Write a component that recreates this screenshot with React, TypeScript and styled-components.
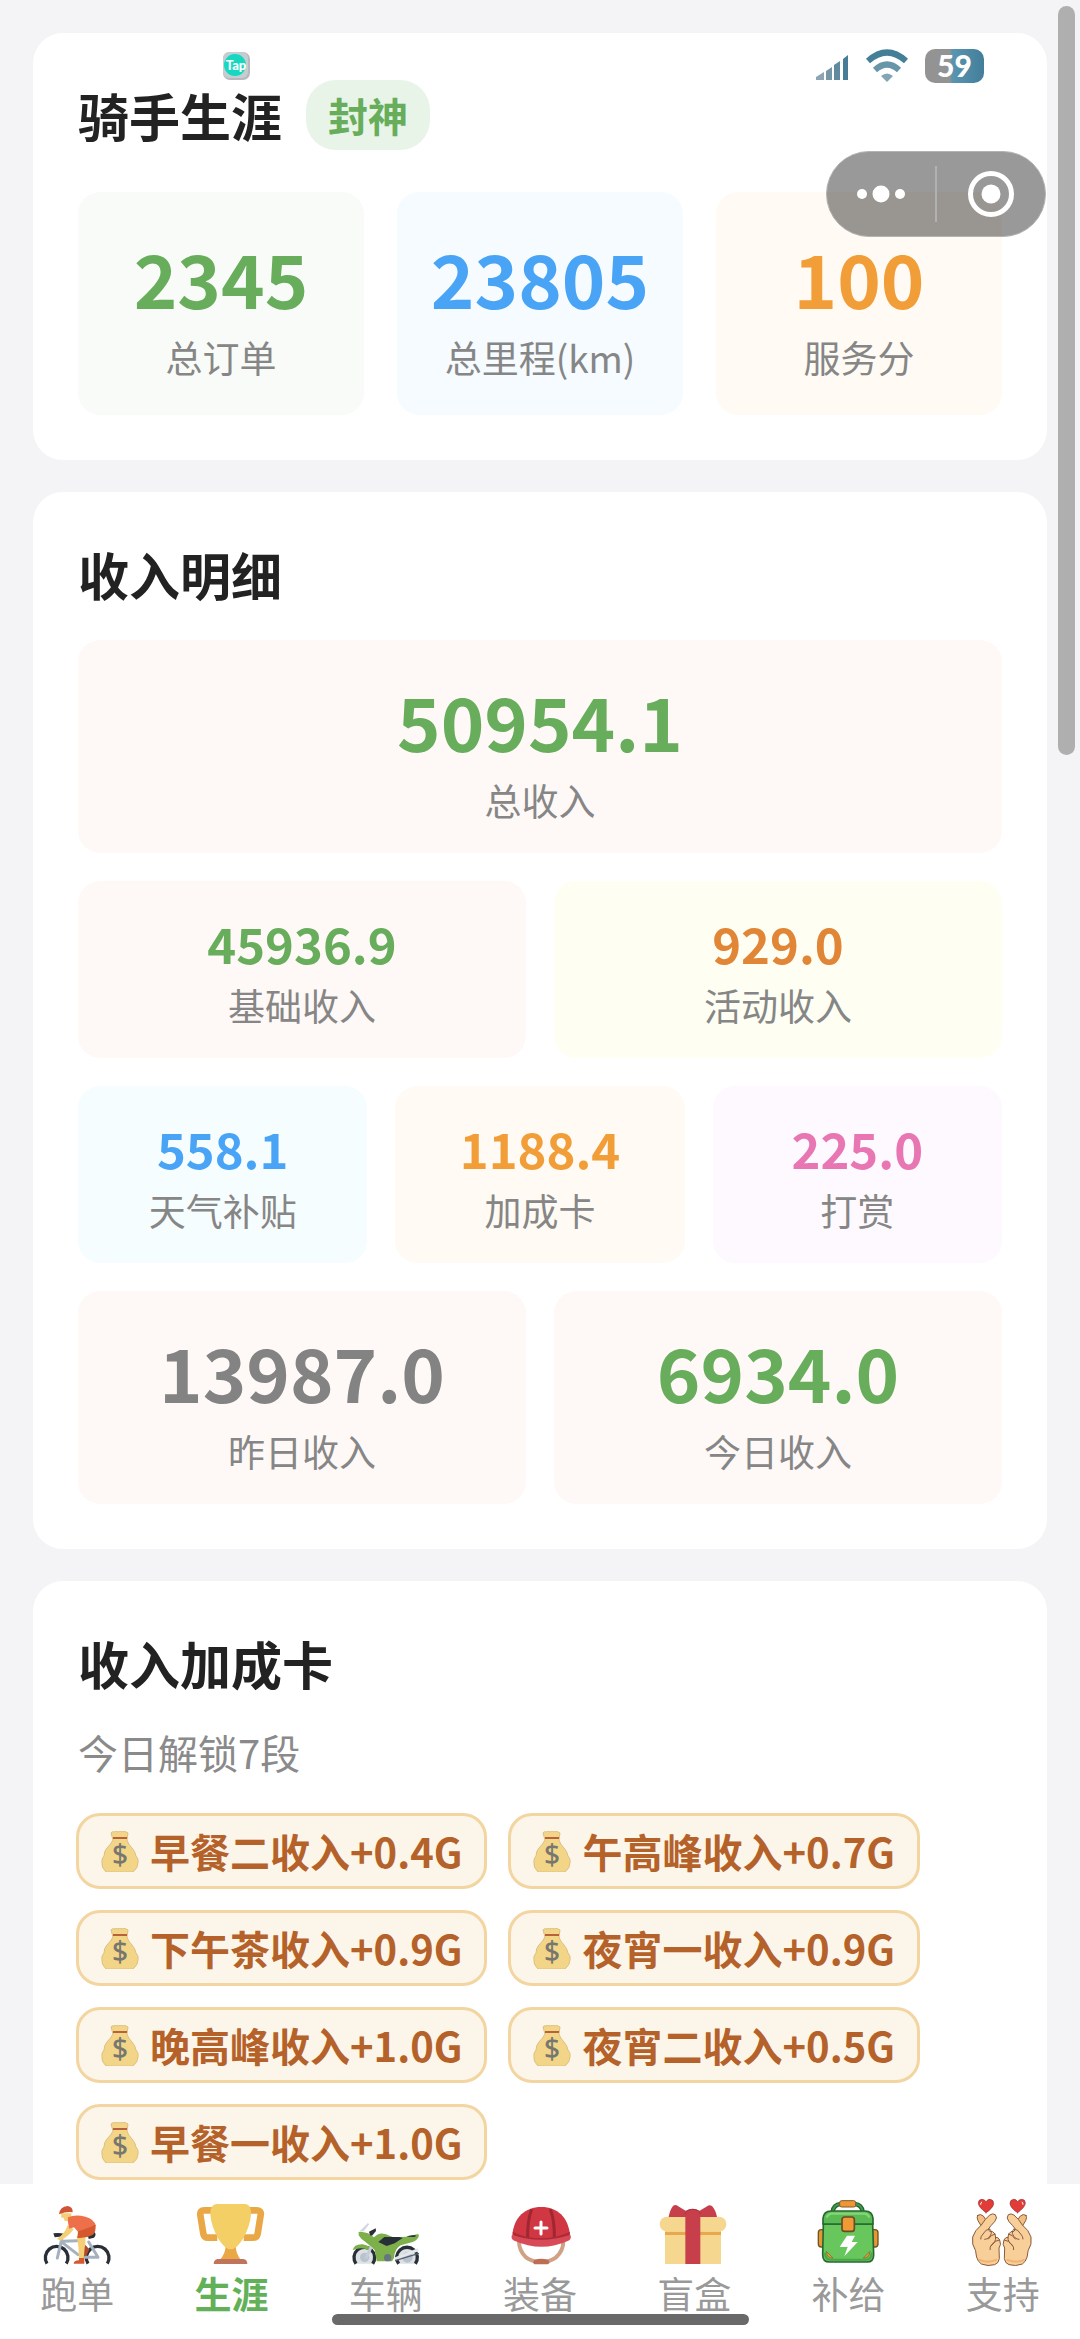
import { ReactNode } from 'react'
import styled, { createGlobalStyle } from 'styled-components'

const GlobalStyle = createGlobalStyle`
  * {
    box-sizing: border-box;
  }
  body {
    margin: 0;
    background: #f4f4f7;
    font-family: 'Noto Sans CJK SC', 'Noto Sans', sans-serif;
  }
  h2, p {
    margin: 0;
  }
`

const Screen = styled.div`
  position: relative;
  display: flex;
  flex-direction: column;
  height: 100vh;
  overflow: hidden;
`

const Content = styled.main`
  flex: 1;
  min-height: 0;
  display: flex;
  flex-direction: column;
  gap: 32px;
  padding: 33px;
  overflow-y: auto;
  scrollbar-width: none;
`

const Card = styled.section`
  flex-shrink: 0;
  padding: 45px;
  border-radius: 30px;
  background: #fff;
`

const CardHeader = styled.div<{ $gap: number }>`
  display: flex;
  align-items: center;
  gap: 24px;
  margin-bottom: ${(p) => p.$gap}px;
`

const CardTitle = styled.h2`
  font-size: 51px;
  line-height: 74px;
  font-weight: 700;
  color: #222;
`

const Badge = styled.span`
  padding: 6px 22px;
  border-radius: 30px;
  background: #e8f4e8;
  color: #67ad5b;
  font-size: 40px;
  line-height: 58px;
  font-weight: 700;
`

const TileGrid = styled.div<{ $gap: number }>`
  display: flex;
  flex-direction: column;
  gap: ${(p) => p.$gap}px;
`

const TileRow = styled.div<{ $gap: number }>`
  display: flex;
  gap: ${(p) => p.$gap}px;
`

const Tile = styled.div<{ $bg: string; $pad: number }>`
  flex: 1 1 0;
  min-width: 0;
  padding: ${(p) => p.$pad}px 0;
  border-radius: 22px;
  background: ${(p) => p.$bg};
  text-align: center;
`

const TileValue = styled.p<{ $color: string; $small?: boolean }>`
  font-size: ${(p) => (p.$small ? 49 : 74)}px;
  line-height: ${(p) => (p.$small ? 72 : 108)}px;
  font-weight: 700;
  color: ${(p) => p.$color};
`

const TileLabel = styled.p`
  font-size: 37px;
  line-height: 53px;
  color: #868686;
`

const Hint = styled.p`
  margin-bottom: 32px;
  font-size: 40px;
  line-height: 58px;
  color: #8a8a8a;
`

const ChipList = styled.ul`
  display: flex;
  flex-wrap: wrap;
  gap: 21px;
  margin: 0 -2px;
  padding: 0;
  list-style: none;
`

const Chip = styled.li`
  display: flex;
  align-items: center;
  gap: 11px;
  padding: 6px 22px;
  border: 3px solid #f2d5a1;
  border-radius: 24px;
  background: #fcf6ea;
  color: #b5622a;
  font-size: 40px;
  line-height: 58px;
  font-weight: 700;
`

const TabBar = styled.nav`
  display: flex;
  flex-shrink: 0;
  padding: 14px 0 19px;
  background: #fff;
`

const TabLink = styled.a<{ $active?: boolean }>`
  flex: 1 1 0;
  display: flex;
  flex-direction: column;
  align-items: center;
  color: ${(p) => (p.$active ? '#62b058' : '#999')};
  font-size: 37px;
  line-height: 54px;
  font-weight: ${(p) => (p.$active ? 700 : 400)};
  text-decoration: none;
`

const TabSvg = styled.svg`
  display: block;
  width: 72px;
  height: 68px;
`

const HomeBar = styled.div`
  position: absolute;
  bottom: 14px;
  left: 50%;
  width: 417px;
  height: 11px;
  margin-left: -208px;
  border-radius: 6px;
  background: #696969;
`

const ScrollThumb = styled.div`
  position: absolute;
  top: 6px;
  right: 5px;
  width: 17px;
  height: 749px;
  border-radius: 9px;
  background: #afafaf;
`

const StatusBar = styled.div`
  position: absolute;
  top: 48px;
  left: 0;
  right: 0;
  display: flex;
  align-items: center;
  justify-content: space-between;
  height: 36px;
  padding: 0 96px 0 222px;
  pointer-events: none;
`

const StatusIcons = styled.div`
  display: flex;
  align-items: center;
  gap: 16px;
`

const Battery = styled.span`
  width: 59px;
  height: 34px;
  border-radius: 10px;
  background: linear-gradient(90deg, #939393 42%, #5a94b0 46%, #427e9a 100%);
  color: #fff;
  font-family: Lato, sans-serif;
  font-size: 30px;
  line-height: 32px;
  font-weight: 900;
  text-align: center;
`

const Capsule = styled.div`
  position: absolute;
  top: 151px;
  right: 34px;
  display: flex;
  align-items: center;
  width: 220px;
  height: 86px;
  border: 1px solid #b4b4b4;
  border-radius: 43px;
  background: rgba(0, 0, 0, 0.4);
`

const CapsuleButton = styled.button`
  flex: 1;
  display: flex;
  align-items: center;
  justify-content: center;
  height: 100%;
  padding: 0;
  border: 0;
  background: none;
`

const CapsuleDivider = styled.span`
  width: 2px;
  height: 56px;
  background: #b2b2b2;
`

function MoneyBag() {
  return (
    <svg width="38" height="41" viewBox="0 0 38 41" aria-hidden="true">
      <path
        d="M12 9 10 2q1-2 3-1 2-2 4 0 2-2 4 0 2-2 4 0l2 1-1 7q1 4 5 8 3 3 4 8 3 3 2 7 0 5-5 9H5q-5-5-4-9-1-4 2-7 0-5 3-8 4-4 6-8Z"
        fill="#f3d588"
        stroke="#dcc082"
        strokeWidth="1"
      />
      <path d="M12 7h14" stroke="#b9603f" strokeWidth="2" />
      <text
        x="19"
        y="34"
        textAnchor="middle"
        fontFamily="Noto Sans"
        fontSize="28"
        fontWeight="500"
        fill="#76786f"
      >
        $
      </text>
    </svg>
  )
}

function BikeIcon() {
  return (
    <TabSvg viewBox="123 54 216 204" aria-hidden="true">
      <g fill="none" stroke="#292f36" strokeWidth="10">
        <path d="M141 251a34 34 0 1 1 58 0" />
        <path d="M264 251a34 34 0 1 1 58 0" />
      </g>
      <path d="M246 186q14 12 22 22l-8 18-10 10Z" fill="#b04a2c" />
      <g fill="none" stroke="#a6b1bf" strokeWidth="9" strokeLinecap="round" strokeLinejoin="round">
        <path d="M185 178 172 234M188 184l44-2M190 190l44 34M266 186l28 46h-38" />
      </g>
      <path d="M160 160q16-3 32 1l-2 10-12-1-14 2Z" fill="#292f36" />
      <path d="M262 160l22-3q6 8-2 16l-16 4Z" fill="#292f36" />
      <path d="M203 136l18 12q-16 22-40 34l-10-6q22-12 32-40Z" fill="#f5cf75" />
      <path d="M230 168l26 0q2 22-2 36l-3 34h-14l-2-40Z" fill="#f5cf75" />
      <path d="M184 100h30v14q-4 8-12 10l-8-2-3-8-8-2Z" fill="#f5cf75" />
      <path d="M204 112q22-10 52-2 28 8 32 28l-20 12-28 12-18-20-14 4q-6-22-4-34Z" fill="#ed704a" />
      <path d="M286 134q4 22-10 32-18 10-44 8l2-20q32-10 52-20Z" fill="#d5582f" />
      <path d="M177 103q3-24 26-25 16 2 15 19-18-3-41 6Z" fill="#cf5436" />
      <path d="M237 234h16v17h-32q0-9 16-10Z" fill="#d5582f" />
    </TabSvg>
  )
}

function TrophyIcon() {
  return (
    <TabSvg viewBox="586 54 216 204" aria-hidden="true">
      <path
        d="M640 91h-26q-14 0-12 14l9 56q2 12 14 12h28M744 91h26q16 0 13 14l-9 56q-2 12-14 12h-28"
        fill="none"
        stroke="#e9a746"
        strokeWidth="20"
      />
      <path d="M678 196h30q0 26 16 44h-64q18-18 18-44Z" fill="#e9a746" />
      <path d="M653 237h78q12 2 12 15H642q0-12 11-15Z" fill="#c0745c" />
      <path d="M650 72h88q17 3 16 30-2 36-24 74-20 32-37 32t-37-32q-22-38-24-74-1-27 18-30Z" fill="#f4cf65" />
    </TabSvg>
  )
}

function MotorbikeIcon() {
  return (
    <TabSvg viewBox="239 54 216 204" aria-hidden="true">
      <g fill="#dce1e6" stroke="#292f36" strokeWidth="10">
        <path d="M257 251a31 31 0 1 1 50 0" />
        <path d="M385 251a31 31 0 1 1 50 0" />
      </g>
      <circle cx="283" cy="232" r="14" fill="#b9c2cd" />
      <circle cx="411" cy="232" r="16" fill="#b9c2cd" />
      <path
        d="M265 156q10-2 28 4l18 12q14-16 34-10l24 10 40-2 34-8q4 2 2 8-4 10-18 16l-36 10q-18 10-20 38l-6 10h-46l-6-34-20-18-20-16-8-10Z"
        fill="#7daf4b"
      />
      <path d="M247 211q4-20 31-18l24 8-8 10q-20-12-47 0Z" fill="#7daf4b" />
      <path d="M268 154l24-24 5 2-17 22Z" fill="#d0d7de" />
      <path d="M296 155l20-10 1 8-12 14-6-1Z" fill="#292f36" />
      <path d="M324 186l18-15h45l10 3-24 16-24 8Z" fill="#292f36" />
      <path d="M408 170q8-6 29-4l-3 5Z" fill="#292f36" />
      <path d="M303 200 287 235" stroke="#c5cdd6" strokeWidth="9" />
      <path d="M374 237l70-28" stroke="#e4e8ec" strokeWidth="9" />
      <path d="M374 242l72-22" stroke="#59636d" strokeWidth="4" />
      <circle cx="352" cy="233" r="11" fill="#66757f" />
    </TabSvg>
  )
}

function HelmetIcon() {
  return (
    <TabSvg viewBox="72 54 216 204" aria-hidden="true">
      <path d="M117 184q0 30 22 49 18 13 44 13t44-13q23-19 23-49" fill="none" stroke="#d1a185" strokeWidth="12" />
      <path d="M163 240q20-7 42 0l4 8-5 5h-41l-4-5Z" fill="#bd6d55" />
      <path d="M97 164C102 112 135 81 184 81s80 31 86 83q-84 44-173 0Z" fill="#d13643" />
      <path d="M155 88q-13 34-12 86M211 88q13 34 12 86" fill="none" stroke="#9d2831" strokeWidth="9" />
      <path d="M98 156q84 38 172 0l-3 14q-82 28-166 0Z" fill="#a92b36" />
      <path d="M96 164q86 30 175 0 5 12-6 18-80 36-162 0-12-6-7-18Z" fill="#d84a58" />
      <path d="M183 126v36M165 144h36" stroke="#fff" strokeWidth="9" strokeLinecap="round" />
    </TabSvg>
  )
}

function GiftIcon() {
  return (
    <TabSvg viewBox="535 54 216 204" aria-hidden="true">
      <path d="M556 150h168v102H556Z" fill="#f5d78f" />
      <path d="M556 155h168v10H556Z" fill="#e8a94c" />
      <rect x="540" y="110" width="200" height="45" rx="22" fill="#f5d78f" />
      <path d="M567 111q4-22 13-33 8-7 18 2l20 12q20-11 42 0l20-12q8-8 17-2 11 12 15 33Z" fill="#c83f4c" />
      <path d="M617 100h45v152h-45Z" fill="#c83f4c" />
      <path d="M617 103q2-14 23-15 20 1 22 15" fill="none" stroke="#a93540" strokeWidth="3" />
    </TabSvg>
  )
}

function BackpackIcon() {
  return (
    <TabSvg viewBox="158 54 216 204" aria-hidden="true">
      <path d="M217 96q2-22 24-24h42q22 2 24 24" fill="none" stroke="#23622f" strokeWidth="13" />
      <path d="M217 96q2-22 24-24h42q22 2 24 24" fill="none" stroke="#3f9a49" strokeWidth="6" />
      <rect x="238" y="62" width="48" height="19" rx="6" fill="#ed9832" stroke="#86572a" strokeWidth="3" />
      <rect x="174" y="149" width="24" height="52" rx="9" fill="#e99535" stroke="#6b5625" strokeWidth="4" />
      <rect x="329" y="149" width="24" height="52" rx="9" fill="#e99535" stroke="#6b5625" strokeWidth="4" />
      <path d="M189 132h148l3 92q0 22-20 22H207q-20 0-20-22Z" fill="#67c65c" stroke="#28682f" strokeWidth="5" />
      <path d="M194 218q0 20 16 21h108q16-1 16-21" fill="none" stroke="#48a74b" strokeWidth="6" />
      <path d="M188 132v-16q2-23 24-23h102q22 0 24 23v16Z" fill="#5aba53" stroke="#28682f" strokeWidth="5" />
      <path d="M200 110q4-8 14-9h98q10 1 14 9" fill="none" stroke="#86d678" strokeWidth="7" strokeLinecap="round" />
      <rect x="245" y="111" width="37" height="43" rx="8" fill="#f09a35" stroke="#6b4a26" strokeWidth="5" />
      <path d="M198 214l20 20q-18 2-20-20ZM329 214l-20 20q18 2 20-20Z" fill="#ed9832" stroke="#80602b" strokeWidth="2" />
      <path d="M260 167h24l-10 19h18l-40 43 10-28h-24Z" fill="#fff" />
    </TabSvg>
  )
}

function Hand() {
  return (
    <g stroke="#8a5a3c" strokeWidth="3" strokeLinejoin="round" strokeLinecap="round">
      <path d="M653 106q8-6 17 2l12 18-16 16-12-20q-5-10-1-16Z" fill="#f3c083" />
      <path
        d="M650 232q4 14 14 20 20 8 40 2 12-4 14-18l-1-32q8-10 2-24-4-9-12-8l-2-10q-6-10-16-8l-4-7q7-10 19-22 10-12 2-21-8-5-17 1-14 12-25 30-20 16-26 36-4 22 8 40Z"
        fill="#f8cf98"
      />
      <path d="M689 147q-12 0-20 15-8 8-7 15M705 162q-12 2-20 15M718 180q-14 2-22 13-8 8-6 16M689 147q6 5 5 13-6 18-20 18M707 172q2 14-14 25" fill="none" />
      <path d="M660 240q20 10 48 0" fill="none" stroke="#efb477" strokeWidth="7" />
      <path d="M678 98q-22-16-23-28 0-12 11-12 9 0 12 8 4-9 12-8 11 1 11 13-2 14-23 27Z" fill="#e23c39" stroke="#963030" strokeWidth="2" />
      <path d="M665 66q-4 2-3 7" stroke="#fff" fill="none" />
    </g>
  )
}

function HandsIcon() {
  return (
    <TabSvg viewBox="621 54 216 204" aria-hidden="true">
      <Hand />
      <g transform="translate(1451 0) scale(-1 1)">
        <Hand />
      </g>
    </TabSvg>
  )
}

function TapIcon() {
  return (
    <svg width="29" height="30" viewBox="0 0 29 30" aria-hidden="true">
      <rect x="1" y="1" width="27" height="28" rx="7" fill="#b9b9bd" />
      <rect x="1" y="1" width="25" height="26" rx="6" fill="#c4ced1" />
      <circle cx="13" cy="14" r="11" fill="#16d8c0" />
      <text x="14" y="19" textAnchor="middle" fontFamily="Lato" fontSize="13" fontWeight="900" fill="#fff">
        Tap
      </text>
    </svg>
  )
}

function SignalIcon() {
  return (
    <svg width="33" height="32" viewBox="0 0 33 32" aria-hidden="true">
      <path d="M0 30v-3l8-5v8Z" fill="#8ba6b2" />
      <path d="M10 21l6-4v13h-6Z" fill="#7697a8" />
      <path d="M18 15l6-4v19h-6Z" fill="#618a9f" />
      <path d="M27 9l5-4v25h-5Z" fill="#477d97" />
    </svg>
  )
}

function WifiIcon() {
  return (
    <svg width="44" height="34" viewBox="0 0 44 34" aria-hidden="true">
      <path d="M3 12q19-17 38 0" fill="none" stroke="#437f96" strokeWidth="6" />
      <path d="M10 21q12-11 24 0" fill="none" stroke="#6796a9" strokeWidth="6" />
      <path d="M16 27q6-5 12 0l-6 6Z" fill="#83a6b5" />
    </svg>
  )
}

const careerStats = [
  { value: '2345', label: '总订单', color: '#67ad5b', bg: '#f9fbf8' },
  { value: '23805', label: '总里程(km)', color: '#4aa4f6', bg: '#f5fbff' },
  { value: '100', label: '服务分', color: '#f19d38', bg: '#fffbf4' },
]

const incomeRows = [
  [{ value: '50954.1', label: '总收入', color: '#67ad5b', bg: '#fef9f6' }],
  [
    { value: '45936.9', label: '基础收入', color: '#67ad5b', bg: '#fef9f6', small: true },
    { value: '929.0', label: '活动收入', color: '#e08636', bg: '#fffef2', small: true },
  ],
  [
    { value: '558.1', label: '天气补贴', color: '#4aa4f6', bg: '#f6fdff', small: true },
    { value: '1188.4', label: '加成卡', color: '#f19d38', bg: '#fffaf3', small: true },
    { value: '225.0', label: '打赏', color: '#e876b2', bg: '#fdf9fe', small: true },
  ],
  [
    { value: '13987.0', label: '昨日收入', color: '#838383', bg: '#fef9f6' },
    { value: '6934.0', label: '今日收入', color: '#67ad5b', bg: '#fef9f6' },
  ],
]

const bonusCards = [
  '早餐二收入+0.4G',
  '午高峰收入+0.7G',
  '下午茶收入+0.9G',
  '夜宵一收入+0.9G',
  '晚高峰收入+1.0G',
  '夜宵二收入+0.5G',
  '早餐一收入+1.0G',
]

const tabs: { id: string; label: string; icon: ReactNode; active?: boolean }[] = [
  { id: 'run', label: '跑单', icon: <BikeIcon /> },
  { id: 'career', label: '生涯', icon: <TrophyIcon />, active: true },
  { id: 'vehicle', label: '车辆', icon: <MotorbikeIcon /> },
  { id: 'gear', label: '装备', icon: <HelmetIcon /> },
  { id: 'box', label: '盲盒', icon: <GiftIcon /> },
  { id: 'supply', label: '补给', icon: <BackpackIcon /> },
  { id: 'support', label: '支持', icon: <HandsIcon /> },
]

export default function App() {
  return (
    <Screen>
      <GlobalStyle />
      <Content>
        <Card>
          <CardHeader $gap={40}>
            <CardTitle>骑手生涯</CardTitle>
            <Badge>封神</Badge>
          </CardHeader>
          <TileRow $gap={33}>
            {careerStats.map((s) => (
              <Tile key={s.label} $bg={s.bg} $pad={31}>
                <TileValue $color={s.color}>{s.value}</TileValue>
                <TileLabel>{s.label}</TileLabel>
              </Tile>
            ))}
          </TileRow>
        </Card>

        <Card>
          <CardHeader $gap={29}>
            <CardTitle>收入明细</CardTitle>
          </CardHeader>
          <TileGrid $gap={28}>
            {incomeRows.map((row, i) => (
              <TileRow key={i} $gap={28}>
                {row.map((s) => (
                  <Tile key={s.label} $bg={s.bg} $pad={26}>
                    <TileValue $color={s.color} $small={'small' in s}>
                      {s.value}
                    </TileValue>
                    <TileLabel>{s.label}</TileLabel>
                  </Tile>
                ))}
              </TileRow>
            ))}
          </TileGrid>
        </Card>

        <Card>
          <CardHeader $gap={23}>
            <CardTitle>收入加成卡</CardTitle>
          </CardHeader>
          <Hint>今日解锁7段</Hint>
          <ChipList>
            {bonusCards.map((name) => (
              <Chip key={name}>
                <MoneyBag />
                {name}
              </Chip>
            ))}
          </ChipList>
        </Card>
      </Content>

      <TabBar>
        {tabs.map((tab) => (
          <TabLink key={tab.id} href={`#${tab.id}`} $active={tab.active}>
            {tab.icon}
            {tab.label}
          </TabLink>
        ))}
      </TabBar>

      <StatusBar>
        <TapIcon />
        <StatusIcons>
          <SignalIcon />
          <WifiIcon />
          <Battery>59</Battery>
        </StatusIcons>
      </StatusBar>

      <Capsule>
        <CapsuleButton aria-label="更多">
          <svg width="48" height="18" viewBox="0 0 48 18" fill="#fff">
            <circle cx="5" cy="9" r="5" />
            <circle cx="24" cy="9" r="8.5" />
            <circle cx="43" cy="9" r="5" />
          </svg>
        </CapsuleButton>
        <CapsuleDivider />
        <CapsuleButton aria-label="关闭">
          <svg width="46" height="46" viewBox="0 0 46 46">
            <circle cx="23" cy="23" r="20.5" fill="none" stroke="#fff" strokeWidth="5" />
            <circle cx="23" cy="23" r="9.5" fill="#fff" />
          </svg>
        </CapsuleButton>
      </Capsule>

      <ScrollThumb />
      <HomeBar />
    </Screen>
  )
}
